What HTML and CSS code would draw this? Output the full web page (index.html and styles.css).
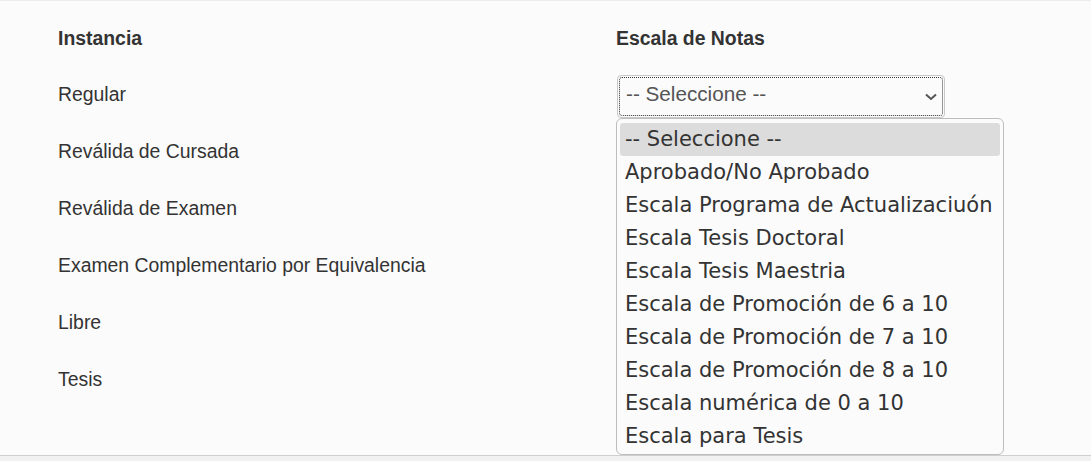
FILE: index.html
```
<!DOCTYPE html>
<html lang="es">
<head>
    <meta charset="UTF-8">
    <title>Instancias - Escala de Notas</title>
    <link rel="stylesheet" href="styles.css">
</head>
<body>
    <div class="panel">
        <div class="grid">
            <div class="cell head">Instancia</div>
            <div class="cell head">Escala de Notas</div>

            <div class="cell">Regular</div>
            <div class="cell">
                <div class="select-wrap">
                    <div class="select">
                        <div class="focus">
                            <span class="value">-- Seleccione --</span>
                            <svg class="chevron" width="12" height="8" viewBox="0 0 12 8">
                                <path d="M1 1.5 L6 6 L11 1.5" fill="none" stroke="#555" stroke-width="2"/>
                            </svg>
                        </div>
                    </div>
                    <ul class="options">
                        <li class="active">-- Seleccione --</li>
                        <li>Aprobado/No Aprobado</li>
                        <li>Escala Programa de Actualizaciuón</li>
                        <li>Escala Tesis Doctoral</li>
                        <li>Escala Tesis Maestria</li>
                        <li>Escala de Promoción de 6 a 10</li>
                        <li>Escala de Promoción de 7 a 10</li>
                        <li>Escala de Promoción de 8 a 10</li>
                        <li>Escala numérica de 0 a 10</li>
                        <li>Escala para Tesis</li>
                    </ul>
                </div>
            </div>

            <div class="cell">Reválida de Cursada</div>
            <div class="cell"></div>

            <div class="cell">Reválida de Examen</div>
            <div class="cell"></div>

            <div class="cell">Examen Complementario por Equivalencia</div>
            <div class="cell"></div>

            <div class="cell">Libre</div>
            <div class="cell"></div>

            <div class="cell">Tesis</div>
            <div class="cell"></div>
        </div>
    </div>
</body>
</html>
```

FILE: styles.css
```
html, body {
    margin: 0;
    padding: 0;
}
body {
    font-family: "Liberation Sans", Arial, sans-serif;
    background-color: #f1f1f1;
    color: #333;
    height: 461px;
    overflow: hidden;
}
.panel {
    background-color: #fbfbfb;
    border-top: 1px solid #ececec;
    border-bottom: 1px solid #cfcfcf;
    height: 456px;
    box-sizing: border-box;
    padding: 9px 0 0 58px;
}
.grid {
    display: grid;
    grid-template-columns: 558px 1fr;
    grid-auto-rows: 57px;
}
.cell {
    display: flex;
    align-items: center;
    font-size: 19.4px;
}
.head {
    font-weight: bold;
    height: 56px;
}
.grid > .cell:nth-child(n+3) {
    margin-top: -2px;
}
.select-wrap {
    position: relative;
    margin-top: 3px;
}
.select {
    width: 328px;
    height: 43px;
    box-sizing: border-box;
    border: 1px solid #c8c8c8;
    border-radius: 4px;
    background: #fbfbfb;
    padding: 1px;
    margin-left: 1px;
}
.focus {
    height: 100%;
    box-sizing: border-box;
    border: 1px dotted #333;
    border-radius: 3px;
    display: flex;
    align-items: center;
    justify-content: space-between;
    padding: 0 5px 0 6px;
}
.value {
    font-size: 20.7px;
    color: #555;
    margin-top: -4px;
}
.chevron {
    margin-top: 2px;
}
.options {
    position: absolute;
    top: 43px;
    left: 0;
    width: 388px;
    box-sizing: border-box;
    margin: 0;
    padding: 4px 3px 1px 3px;
    list-style: none;
    background: #fbfbfb;
    border: 1px solid #bdbdbd;
    border-radius: 6px;
    font-family: "DejaVu Sans", sans-serif;
    font-size: 21px;
    color: #333;
}
.options li {
    height: 33px;
    line-height: 33px;
    padding-left: 5px;
    border-radius: 3px;
    white-space: nowrap;
}
.options li.active {
    background-color: #dcdcdc;
}
```
